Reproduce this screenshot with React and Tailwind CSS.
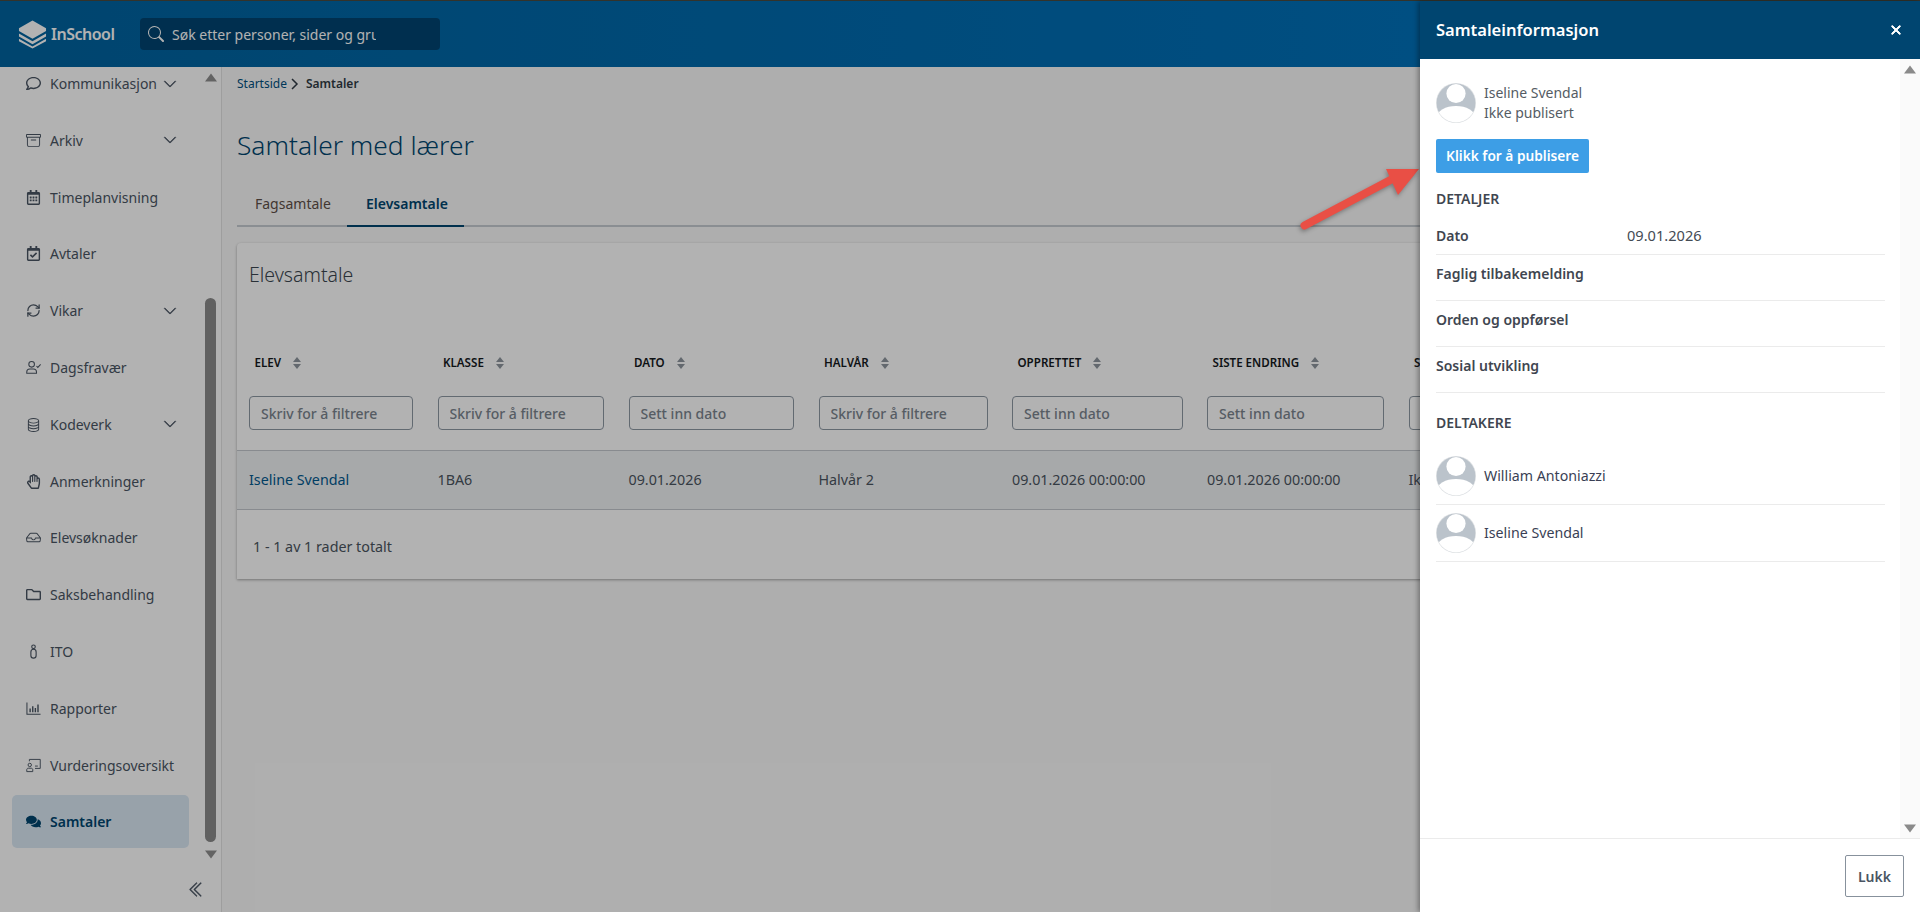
import React from "react";
import { BsArchive, BsDatabase, BsInbox, BsChevronDown, BsChevronDoubleLeft, BsSearch, BsX } from "react-icons/bs";
import { FaRegHandPaper, FaComments, FaRegComment, FaRegCalendarAlt, FaRegCalendarCheck, FaRegFolder } from "react-icons/fa";
import { LuRefreshCw } from "react-icons/lu";

const Ito = ({ className }) => (
  <svg viewBox="0 0 16 16" className={className} fill="none" stroke="currentColor" strokeWidth="1.2">
    <circle cx="8" cy="3" r="1.9" />
    <rect x="5.2" y="5.6" width="5.6" height="9.4" rx="2.8" />
  </svg>
);

const PersonCheckIcon = ({ className }) => (
  <svg viewBox="0 0 16 16" className={className} fill="none" stroke="currentColor" strokeWidth="1.1">
    <circle cx="6" cy="4.6" r="3" />
    <path d="M0.8 14.2v-1.4c0-2 1.6-3.2 3.2-3.2h4c1.6 0 3.2 1.2 3.2 3.2v1.4z" />
    <path d="M11.2 6.4l1.4 1.5L15.6 4.6" />
  </svg>
);

const ReportIcon = ({ className }) => (
  <svg viewBox="0 0 16 16" className={className} fill="none" stroke="currentColor" strokeWidth="1.1">
    <path d="M1 1.5v12.6h14.5" />
    <path d="M4.4 12V8M7.2 12V5.6M10 12V7.4M12.8 12V3.6" strokeWidth="1.5" />
  </svg>
);

const BoardIcon = ({ className }) => (
  <svg viewBox="0 0 16 16" className={className} fill="none" stroke="currentColor" strokeWidth="1">
    <circle cx="4" cy="7.4" r="1.8" />
    <path d="M0.8 14.5v-2c0-1 .8-1.6 1.6-1.6h3.2c.8 0 1.6.6 1.6 1.6v2z" />
    <path d="M3.6 3.5V1.5h11.6v9.6H9.6" />
    <path d="M9.6 8.6h3" />
  </svg>
);

const items = [
  { label: "Kommunikasjon", icon: FaRegComment, chev: true },
  { label: "Arkiv", icon: BsArchive, chev: true },
  { label: "Timeplanvisning", icon: FaRegCalendarAlt },
  { label: "Avtaler", icon: FaRegCalendarCheck },
  { label: "Vikar", icon: LuRefreshCw, chev: true },
  { label: "Dagsfravær", icon: PersonCheckIcon },
  { label: "Kodeverk", icon: BsDatabase, chev: true },
  { label: "Anmerkninger", icon: FaRegHandPaper },
  { label: "Elevsøknader", icon: BsInbox },
  { label: "Saksbehandling", icon: FaRegFolder },
  { label: "ITO", icon: Ito },
  { label: "Rapporter", icon: ReportIcon },
  { label: "Vurderingsoversikt", icon: BoardIcon },
  { label: "Samtaler", icon: FaComments, active: true },
];

const columns = [
  { label: "ELEV", ph: "Skriv for å filtrere", cell: "Iseline Svendal", link: true },
  { label: "KLASSE", ph: "Skriv for å filtrere", cell: "1BA6" },
  { label: "DATO", ph: "Sett inn dato", cell: "09.01.2026" },
  { label: "HALVÅR", ph: "Skriv for å filtrere", cell: "Halvår 2" },
  { label: "OPPRETTET", ph: "Sett inn dato", cell: "09.01.2026 00:00:00" },
  { label: "SISTE ENDRING", ph: "Sett inn dato", cell: "09.01.2026 00:00:00" },
  { label: "STATUS", ph: "Skriv for å filtrere", cell: "Ikke publisert" },
];

const gridCols = "grid grid-cols-[164px_166.5px_165.5px_169px_170.5px_177px_160px] gap-x-[24.5px] px-[12px]";

const Sort = () => (
  <svg viewBox="0 0 8 12" className="ml-[12px] h-[12px] w-[8px] shrink-0" fill="#8f969e">
    <path d="M4 0 8 5H0zM0 7h8l-4 5z" />
  </svg>
);

const Avatar = () => (
  <svg viewBox="0 0 40 40" className="h-[40px] w-[40px] shrink-0">
    <defs>
      <clipPath id="avatarClip"><circle cx="20" cy="20" r="19.5" /></clipPath>
    </defs>
    <circle cx="20" cy="20" r="20" fill="#dcdfe2" />
    <g clipPath="url(#avatarClip)">
      <circle cx="20" cy="20" r="19.5" fill="#bbc3cb" />
      <circle cx="20" cy="10.5" r="9.6" fill="#fff" />
      <ellipse cx="20" cy="34" rx="19" ry="11" fill="#fff" />
    </g>
  </svg>
);

const Tri = ({ up, className }) => (
  <svg viewBox="0 0 12 9" className={className} fill="currentColor">
    <path d={up ? "M6 0.5 12 8.5H0z" : "M0 0.5h12L6 8.5z"} />
  </svg>
);

const DetailRow = ({ label, value, h }) => (
  <div className={`flex border-b border-[#ebebeb] ${h}`}>
    <span className="w-[191px] font-semibold text-[#3f4650]">{label}</span>
    {value && <span className="text-[14.6px] text-[#444b54]">{value}</span>}
  </div>
);

const Person = ({ name, top }) => (
  <div className={`flex h-[57px] items-center gap-[8px] border-b border-[#ebebeb] ${top}`}>
    <Avatar />
    <span className="text-[14.2px] text-[#3a3f55]">{name}</span>
  </div>
);

export default function App() {
  return (
    <div
      className="relative flex h-screen w-full flex-col overflow-hidden bg-[#fafafa] text-[14px]"
      style={{ fontFamily: '"Noto Sans", "Open Sans", sans-serif' }}
    >
      <div className="h-px shrink-0 bg-[#4a4a3e]" />
      <header className="flex h-[66px] shrink-0 items-center bg-gradient-to-r from-[#00639f] to-[#0076c4]">
        <div className="ml-[18px] flex w-[122px] items-center">
          <svg viewBox="0 0 30 30" className="h-[30px] w-[29px] shrink-0" fill="#fff">
            <path d="M15 1 29 9v3L15 20 1 12V9z" />
            <path d="M1 14.5 15 22.5l14-8v3L15 25.5l-14-8z" />
            <path d="M1 20 15 28l14-8v2.5L15 30 1 22.5z" />
          </svg>
          <span className="ml-[4px] text-[16px] font-semibold tracking-[-0.5px] text-white">InSchool</span>
        </div>
        <div className="flex h-[32px] w-[300px] items-center rounded-[4px] bg-[#004471] pl-[8px] text-white">
          <BsSearch className="h-[16px] w-[16px]" />
          <span className="ml-[8px] w-[204px] overflow-hidden whitespace-nowrap">Søk etter personer, sider og grupper</span>
        </div>
      </header>

      <div className="flex min-h-0 flex-1">
        <aside className="flex w-[222px] shrink-0 border-r border-[#e2e2e2] bg-white">
          <div className="flex w-[206px] flex-col overflow-hidden">
            <nav className="-mt-[10px] flex min-h-0 flex-1 flex-col gap-[3.8px] overflow-visible pl-[12px] pr-[16px]">
              {items.map(({ label, icon: Icon, chev, active }) => (
                <div
                  key={label}
                  className={`flex h-[53px] shrink-0 items-center rounded-[5px] pl-[14px] ${active ? "bg-[#dae8f4] font-semibold text-[#00466f]" : "text-[#4a5563]"}`}
                >
                  <Icon className="h-[15px] w-[15px] shrink-0" />
                  <span className="ml-[9px]">{label}</span>
                  {chev && <BsChevronDown className="absolute left-[163px] h-[14px] w-[14px]" strokeWidth="0.6" />}
                </div>
              ))}
            </nav>
            <div className="flex h-[44px] shrink-0 items-center justify-end pb-[2px] text-[#4a5563]">
              <BsChevronDoubleLeft className="h-[17px] w-[17px]" strokeWidth="0.4" />
            </div>
          </div>
          <div className="flex w-[16px] flex-col">
            <Tri up className="mt-[6px] h-[9px] w-[12px] text-[#8f8f8f]" />
            <div className="mt-[216px] h-[544px] w-[11px] rounded-[6px] bg-[#8b8b8b]" />
            <Tri className="mt-[8px] h-[9px] w-[12px] text-[#8f8f8f]" />
          </div>
        </aside>

        <main className="min-w-0 flex-1 pl-[15px]">
          <div className="flex h-[32px] items-center pt-[1px] text-[12px]">
            <span className="text-[#00507f]">Startside</span>
            <span className="mx-[4px] text-[#303a44]">
              <svg viewBox="0 0 8 12" className="h-[12px] w-[8px]" fill="none" stroke="currentColor" strokeWidth="1.5"><path d="M1 1l5 5-5 5" /></svg>
            </span>
            <span className="ml-[3px] font-semibold text-[#303a44]">Samtaler</span>
          </div>
          <h1 className="mt-[28px] text-[26.3px] font-light leading-[36px] text-[#00466f]">Samtaler med lærer</h1>
          <div className="mt-[20px] flex h-[44px] border-b-2 border-[#c6ccd2]">
            <div className="flex h-[44px] w-[110px] items-center pb-[4px] pl-[18px] text-[#5e5048]">Fagsamtale</div>
            <div className="flex h-[44px] w-[117px] items-center border-b-2 border-[#00466f] pb-[2px] pl-[19px] font-semibold text-[#00466f]">Elevsamtale</div>
          </div>
          <section className="mt-[16px] h-[336px] rounded-t-[4px] bg-white shadow-[0_1px_3px_rgba(0,0,0,0.35)]">
            <h2 className="px-[12px] pt-[19px] text-[19.5px] font-light leading-[26px] text-[#3b4650]">Elevsamtale</h2>
            <div className={`${gridCols} mt-[65px] items-center`}>
              {columns.map((c) => (
                <div key={c.label} className="flex h-[20px] items-center pl-[5.5px] text-[11.6px] font-semibold text-[#15191d]">
                  {c.label}
                  <Sort />
                </div>
              ))}
            </div>
            <div className={`${gridCols} mt-[23px]`}>
              {columns.map((c) => (
                <input
                  key={c.label}
                  readOnly
                  placeholder={c.ph}
                  className="h-[34px] w-full rounded-[4px] border border-[#8d98a3] bg-white pl-[11px] text-[14px] font-medium outline-none placeholder:text-[#7b858f]"
                />
              ))}
            </div>
            <div className={`${gridCols} mt-[20px] h-[60px] items-center border-y border-[#c3c8cd] bg-[#f0f2f4]`}>
              {columns.map((c) => (
                <span key={c.label} className={`whitespace-nowrap text-[14.3px] ${c.link ? "text-[#00598f]" : "text-[#4b5560]"}`}>{c.cell}</span>
              ))}
            </div>
            <div className="flex h-[69px] items-center pl-[16px] pt-[4px] text-[14.3px] text-[#4b5560]">1 - 1 av 1 rader totalt</div>
          </section>
        </main>
      </div>

      <div className="absolute inset-0 bg-black/30" />

      <svg viewBox="0 0 125 70" className="absolute left-[1297px] top-[162px] h-[70px] w-[125px]" style={{ filter: "drop-shadow(-1px 2px 2px rgba(0,0,0,0.3))" }}>
        <path d="M7.5 63.5 101 14" stroke="#e94f45" strokeWidth="8" strokeLinecap="round" fill="none" />
        <path d="M122 7 89 7 101 33z" fill="#e94f45" />
      </svg>

      <aside className="absolute bottom-0 right-0 top-px flex w-[500px] flex-col bg-white text-[14px] shadow-[-2px_0_5px_rgba(0,0,0,0.35)]">
        <div className="flex h-[58px] shrink-0 items-center justify-between bg-[#004570] pl-[16px] pr-[14px] text-white">
          <span className="text-[16.5px] font-semibold">Samtaleinformasjon</span>
          <BsX className="h-[20px] w-[20px]" strokeWidth="0.8" />
        </div>
        <div className="flex min-h-0 flex-1">
          <div className="min-w-0 flex-1 pl-[16px] pr-[15px]">
            <div className="mt-[24px] flex items-center gap-[8px] text-[#555c64]">
              <Avatar />
              <div className="leading-[20px]">
                <div>Iseline Svendal</div>
                <div>Ikke publisert</div>
              </div>
            </div>
            <button className="mt-[16px] flex h-[34px] w-[153px] items-center justify-center rounded-[2px] bg-[#3d9ee6] text-[13.7px] font-semibold text-white">Klikk for å publisere</button>
            <h3 className="mt-[16px] h-[20px] font-semibold leading-[20px] text-[#3f4650]">DETALJER</h3>
            <DetailRow label="Dato" value="09.01.2026" h="mt-[16px] h-[30px]" />
            <DetailRow label="Faglig tilbakemelding" h="h-[46px] pt-[8px]" />
            <DetailRow label="Orden og oppførsel" h="h-[46px] pt-[8px]" />
            <DetailRow label="Sosial utvikling" h="h-[46px] pt-[8px]" />
            <h3 className="mt-[20px] h-[20px] font-semibold leading-[20px] text-[#3f4650]">DELTAKERE</h3>
            <Person name="William Antoniazzi" top="mt-[15px]" />
            <Person name="Iseline Svendal" top="" />
          </div>
          <div className="flex w-[20px] shrink-0 flex-col items-center justify-between bg-[#fafafa] pb-[5px] pt-[6px] text-[#8a8a8a]">
            <Tri up className="h-[9px] w-[12px]" />
            <Tri className="h-[9px] w-[12px]" />
          </div>
        </div>
        <div className="flex h-[74px] shrink-0 items-start justify-end border-t border-[#ebebeb] pr-[16px] pt-[16px]">
          <button className="h-[42px] w-[59px] rounded-[2px] border border-[#87919c] bg-white font-semibold text-[#4a5563]">Lukk</button>
        </div>
      </aside>
    </div>
  );
}
